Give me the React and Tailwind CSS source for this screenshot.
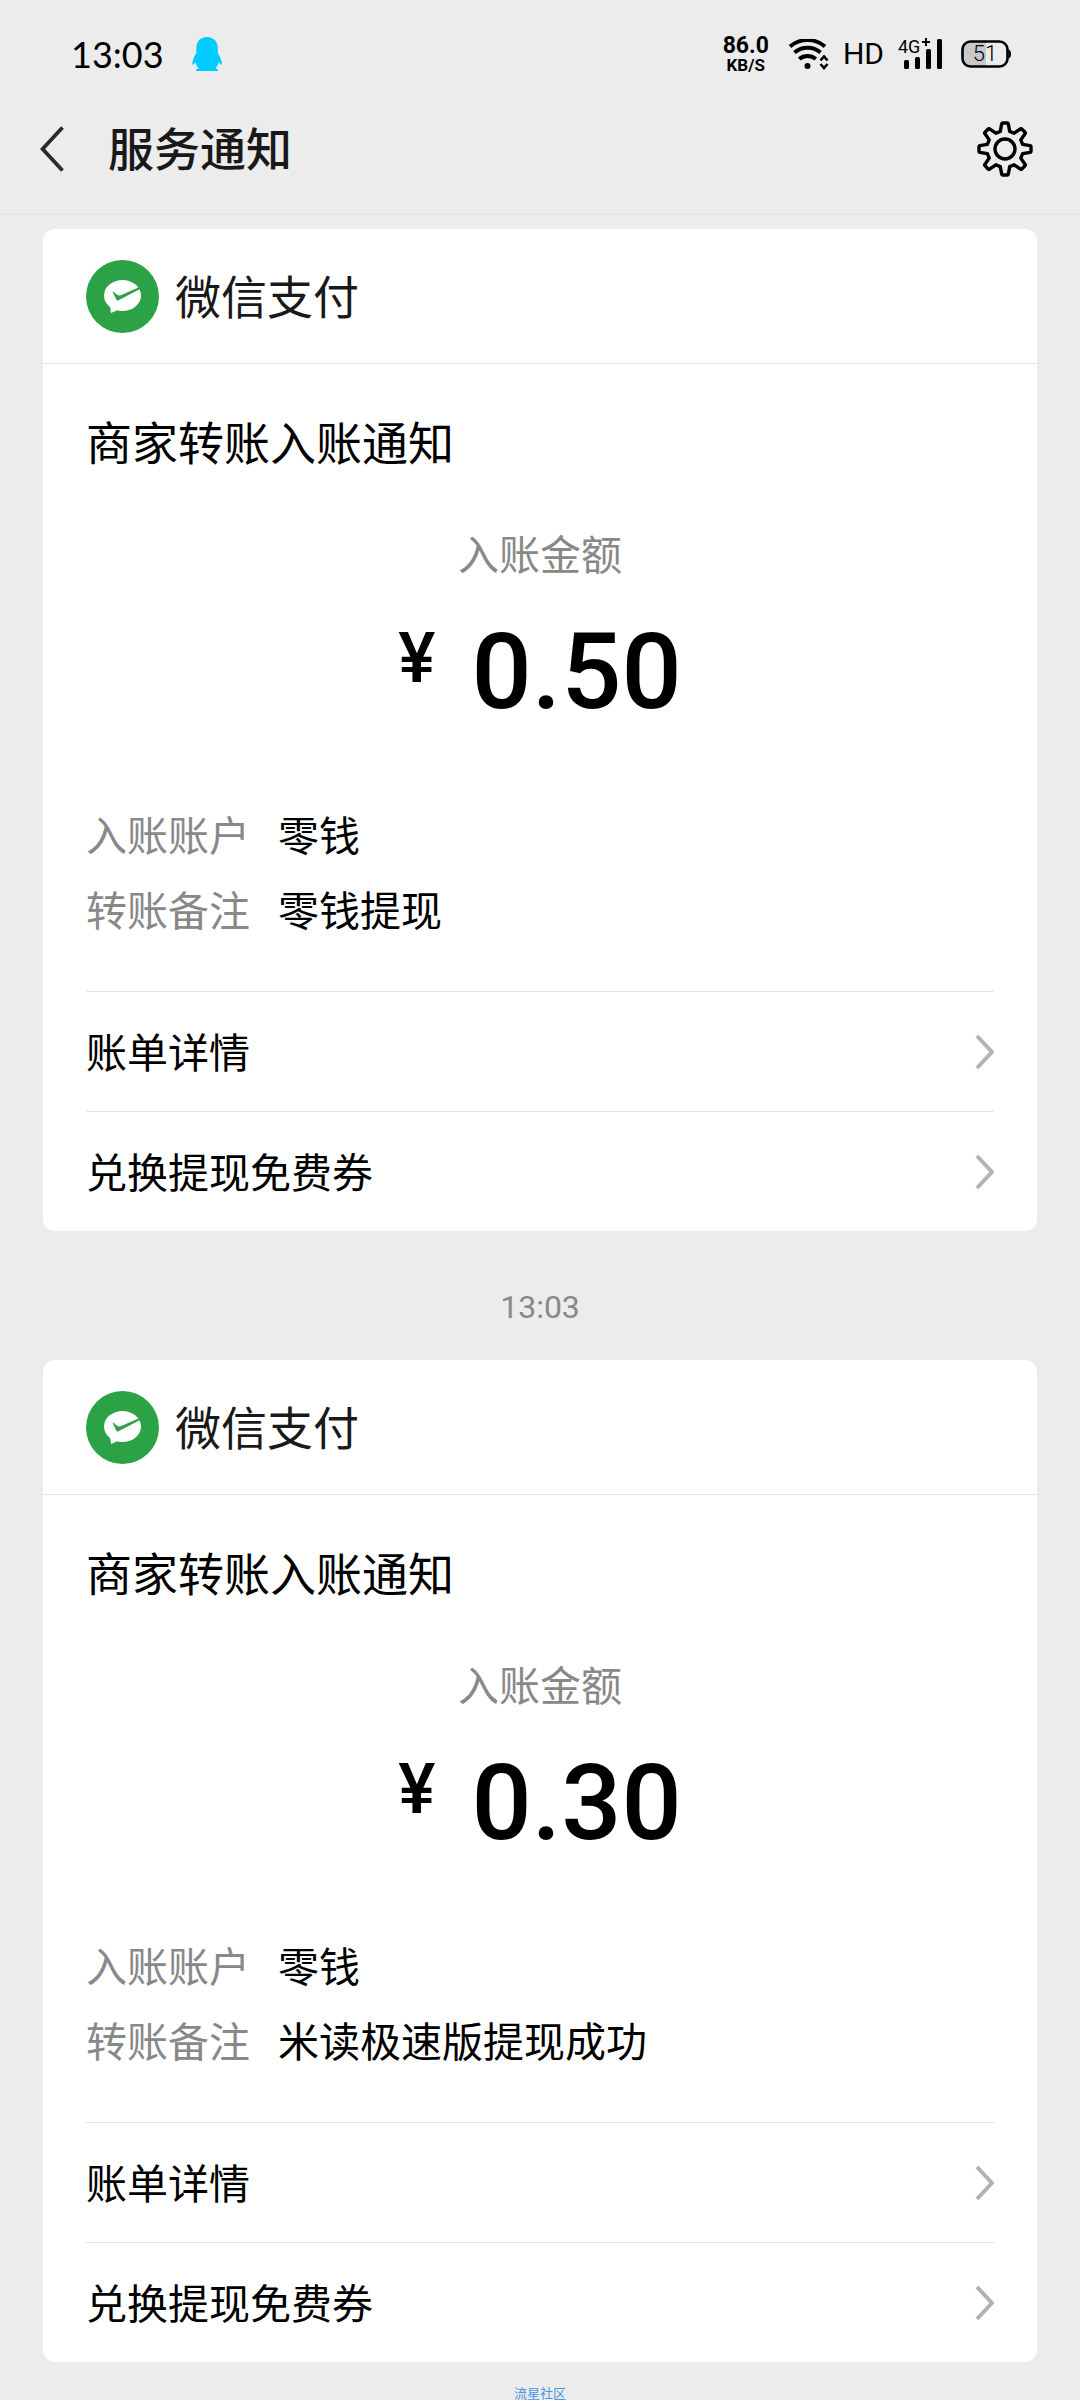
// src/App.jsx - Service notifications screen

const notices = [
  {
    id: 1,
    amount: '0.50',
    details: [
      { label: '入账账户', value: '零钱' },
      { label: '转账备注', value: '零钱提现' },
    ],
  },
  {
    id: 2,
    time: '13:03',
    amount: '0.30',
    details: [
      { label: '入账账户', value: '零钱' },
      { label: '转账备注', value: '米读极速版提现成功' },
    ],
  },
]

const actions = ['账单详情', '兑换提现免费券']

// ─── Icons ──────────────────────────────────────────────────
const PenguinIcon = () => (
  <svg className="w-[30px] h-[34px]" viewBox="0 0 30 34" fill="#00ccff" aria-hidden="true">
    <path d="M15 0C8 0 4.300 5 4.300 11v5C2.500 18.500.5 23 .3 26.500c0 1.600 1 1.500 1.800.3l1.300-1.600c.6 2.500 1.700 4.500 3.300 6-1.600.5-2.900 1.200-2.900 2.800h22.500c0-1.600-1.300-2.300-2.900-2.800 1.600-1.500 2.700-3.500 3.300-6l1.300 1.600c.8 1.200 1.800 1.300 1.800-.3-.2-3.500-2.200-8-4-10.500v-5C25.700 5 22 0 15 0z" />
  </svg>
)

const WifiIcon = () => (
  <svg className="w-10 h-[31px]" viewBox="0 0 40 31" fill="none" stroke="#000" strokeWidth="4" aria-hidden="true">
    <path d="M1 7.500a27 27 0 0 1 35 0" />
    <path d="M5.500 13.500a20 20 0 0 1 26 0" />
    <path d="M10.200 20a13 13 0 0 1 16.600 0" />
    <circle cx="18.500" cy="27" r="3" fill="#000" stroke="none" />
    <path strokeWidth="2.600" d="M31.500 21.500l3.500-4 3.500 4M31.500 25l3.500 4 3.500-4" />
  </svg>
)

const SignalBars = () => (
  <svg className="w-[45px] h-[31px] overflow-visible" viewBox="0 0 45 31" aria-hidden="true">
    <rect x="6" y="21" width="5" height="9" rx="1.500" />
    <rect x="17" y="18" width="5" height="12" rx="1.500" />
    <rect x="28" y="10" width="5" height="20" rx="1.500" />
    <rect x="39" y="0" width="5" height="30" rx="1.500" />
    <path d="M28-1v8M24 3h8" stroke="#000" strokeWidth="2" />
  </svg>
)

const BatteryIcon = () => (
  <svg className="w-[51px] h-[28px]" viewBox="0 0 51 28" fill="none" aria-hidden="true">
    <path d="M25 2H10a8 8 0 0 0-8 8v8a8 8 0 0 0 8 8h15z" fill="#c8c8c8" />
    <rect x="1.500" y="1.500" width="45" height="25" rx="8" stroke="#000" strokeWidth="2.600" />
    <path d="M47.500 9c2 1.500 2.500 3 2.500 5s-.5 3.500-2.500 5z" fill="#000" />
  </svg>
)

const BackIcon = () => (
  <svg className="w-6 h-[46px]" viewBox="0 0 24 46" fill="none" stroke="#2b2b2b" strokeWidth="3.800" aria-hidden="true">
    <path d="M22.500 1.500L2.600 23l19.900 21.500" />
  </svg>
)

const GearIcon = () => (
  <svg className="w-14 h-14" viewBox="-28 -28 56 56" fill="none" stroke="#000" strokeWidth="3.400" strokeLinejoin="round" aria-hidden="true">
    <path d="M-4.700-17.600L-3.300-25.200Q-3-26-2.200-26H2.200Q3-26 3.300-25.200L4.700-17.600L9.100-15.800L15.500-20.200Q16.200-20.600 16.800-20L20-16.800Q20.600-16.200 20.200-15.500L15.800-9.100L17.600-4.700L25.200-3.300Q26-3 26-2.200V2.200Q26 3 25.200 3.300L17.600 4.700L15.800 9.100L20.200 15.500Q20.600 16.200 20 16.800L16.800 20Q16.200 20.600 15.500 20.200L9.100 15.800L4.700 17.600L3.300 25.200Q3 26 2.200 26H-2.200Q-3 26-3.300 25.200L-4.700 17.600L-9.100 15.800L-15.500 20.200Q-16.200 20.600-16.800 20L-20 16.800Q-20.600 16.200-20.200 15.500L-15.800 9.100L-17.600 4.700L-25.200 3.300Q-26 3-26 2.200V-2.200Q-26-3-25.200-3.300L-17.600-4.700L-15.800-9.100L-20.200-15.500Q-20.600-16.200-20-16.800L-16.800-20Q-16.200-20.600-15.500-20.200L-9.100-15.800Z" />
    <circle r="10" />
  </svg>
)

const PayLogo = () => (
  <svg className="w-[73px] h-[73px] shrink-0" viewBox="0 0 73 73" aria-hidden="true">
    <circle cx="36.500" cy="36.500" r="36.500" fill="#2ba245" />
    <ellipse cx="36.500" cy="35.500" rx="18.500" ry="15.500" fill="#fff" />
    <path d="M24 45l1 8 9-4z" fill="#fff" />
    <path d="M26.500 31.500c1.500 0 2.500 2 5 3.500 1.500.8 3 .2 5-.6L53 27.300l1.500 1.500-22 11.500c-1 .5-1.800.3-2.300-.8z" fill="#2ba245" />
  </svg>
)

const Chevron = () => (
  <svg className="w-[19px] h-9" viewBox="0 0 19 36" fill="none" stroke="#b2b2b2" strokeWidth="4" strokeLinejoin="round" aria-hidden="true">
    <path d="M2 2l15 16L2 34" />
  </svg>
)

// ─── Layout ─────────────────────────────────────────────────
function StatusBar() {
  return (
    <div className="flex items-center justify-between h-[108px] pl-[71px] pr-[68px] text-black">
      <div className="flex items-center gap-7">
        <time className="font-['Lato',sans-serif] text-[36px] leading-10">13:03</time>
        <PenguinIcon />
      </div>
      <div className="flex items-center font-['Roboto',sans-serif]">
        <div className="mr-5 text-center font-bold">
          <p className="text-[23px] leading-[22px]">86.0</p>
          <p className="text-[17px] leading-4">KB/S</p>
        </div>
        <WifiIcon />
        <span className="ml-3.5 mr-3.5 text-[30px] leading-8">HD</span>
        <div className="relative mr-[18px]">
          <SignalBars />
          <span className="absolute left-0 -top-1 text-[18px] leading-6">4G</span>
        </div>
        <div className="relative">
          <BatteryIcon />
          <span className="absolute inset-y-0 left-0 w-12 text-center text-[22px] leading-7 font-light">51</span>
        </div>
      </div>
    </div>
  )
}

function NavBar() {
  return (
    <header className="flex items-center h-[107px] pb-6 pl-10 pr-[47px] border-b border-[#e2e2e2]">
      <button type="button" aria-label="返回">
        <BackIcon />
      </button>
      <h1 className="flex-1 ml-11 pb-1.5 text-[46px] leading-[60px] font-medium text-[#191919]">服务通知</h1>
      <button type="button" aria-label="设置">
        <GearIcon />
      </button>
    </header>
  )
}

function NoticeCard({ amount, details }) {
  return (
    <article className="rounded-xl bg-white text-black">
      <div className="flex items-center gap-4 h-[135px] px-[43px] border-b border-[#e2e2e2]">
        <PayLogo />
        <span className="pb-1 text-[46px] leading-[60px] text-[#191919]">微信支付</span>
      </div>

      <div className="px-[43px]">
        <h2 className="pt-[46px] text-[46px] leading-[60px]">商家转账入账通知</h2>

        <div className="mt-[54px] text-center">
          <p className="text-[41px] leading-[56px] text-[#888]">入账金额</p>
          <p className="flex justify-center gap-9 mt-8 font-['Roboto',sans-serif] font-medium">
            <span className="text-[70px] leading-[92px]">¥</span>
            <span className="text-[106px] leading-[120px]">{amount}</span>
          </p>
        </div>

        <dl className="mt-16 pb-[45px] text-[41px] leading-[75px]">
          {details.map((row) => (
            <div key={row.label} className="flex gap-7">
              <dt className="shrink-0 text-[#888]">{row.label}</dt>
              <dd>{row.value}</dd>
            </div>
          ))}
        </dl>

        {actions.map((label) => (
          <a key={label} href="#" className="flex items-center justify-between h-[120px] border-t border-[#e2e2e2] text-[41px] leading-[56px]">
            <span className="pb-1">{label}</span>
            <Chevron />
          </a>
        ))}
      </div>
    </article>
  )
}

function App() {
  return (
    <div className="min-h-screen bg-[#ececec] font-['Noto_Sans_CJK_SC',sans-serif]">
      <StatusBar />
      <NavBar />
      <main className="px-[43px] pt-3.5">
        {notices.map((notice) => (
          <section key={notice.id}>
            {notice.time && (
              <time className="block pt-14 pb-[33px] text-center font-['Roboto',sans-serif] text-[32px] leading-10 text-[#888]">
                {notice.time}
              </time>
            )}
            <NoticeCard amount={notice.amount} details={notice.details} />
          </section>
        ))}
      </main>
      <footer className="pt-6 text-center text-[13px] leading-[13px] text-[#4a96e0]">流星社区</footer>
    </div>
  )
}

export default App
